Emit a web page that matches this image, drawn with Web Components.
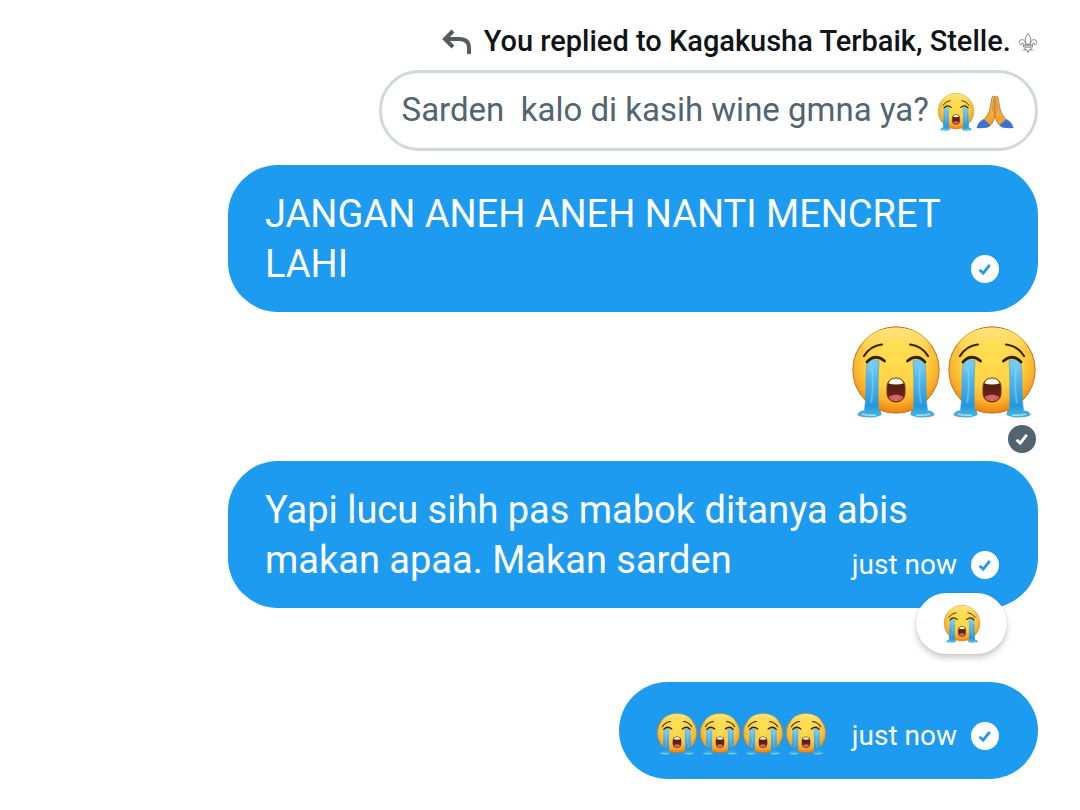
<!DOCTYPE html>
<html lang="id">
<head>
<meta charset="utf-8">
<meta name="viewport" content="width=device-width, initial-scale=1">
<title>Messages</title>
<style>
body {
  margin: 0;
  background: #fff;
  color: #0f1419;
  font-family: Roboto, "Liberation Sans", sans-serif;
}
</style>
</head>
<body>
<chat-thread>
  <reply-context>You replied to Kagakusha Terbaik, Stelle. <fleur-mark></fleur-mark></reply-context>
  <quoted-message>Sarden  kalo di kasih wine gmna ya? <emoji-cry></emoji-cry><emoji-pray></emoji-pray></quoted-message>
  <message-bubble>JANGAN ANEH ANEH NANTI MENCRET LAHI</message-bubble>
  <jumbo-message><emoji-cry></emoji-cry><emoji-cry></emoji-cry></jumbo-message>
  <message-bubble time="just now">Yapi lucu sihh pas mabok ditanya abis makan apaa. Makan sarden<emoji-cry slot="reaction"></emoji-cry></message-bubble>
  <message-bubble time="just now"><emoji-cry></emoji-cry><emoji-cry></emoji-cry><emoji-cry></emoji-cry><emoji-cry></emoji-cry></message-bubble>
</chat-thread>

<script>
function makeTemplate(html) {
  const template = document.createElement('template');
  template.innerHTML = html;
  return template;
}

class BaseElement extends HTMLElement {
  constructor() {
    super();
    const root = this.attachShadow({ mode: 'open' });
    root.appendChild(this.constructor.template.content.cloneNode(true));
  }
}

class ChatThread extends BaseElement {
  static template = makeTemplate(`
<style>
:host {
  display: flex;
  flex-direction: column;
  align-items: flex-end;
  gap: 8px;
  padding: 25px 42px;
}
</style>
<slot></slot>
`);
}

class ReplyContext extends BaseElement {
  static template = makeTemplate(`
<style>
:host {
  display: flex;
  align-items: center;
  gap: 12px;
  margin-bottom: 5px;
  font-size: 29px;
  font-weight: 500;
  line-height: 32px;
}
svg {
  flex: none;
  width: 30px;
  height: 26px;
}
</style>
<svg viewBox="0 0 30 26" fill="none" stroke="#565b62" stroke-width="4" aria-hidden="true">
  <path d="M11 3L3 11L11 19M3 11H17Q27 11 27 20V26"/>
</svg>
<span><slot></slot></span>
`);
}

class FleurMark extends BaseElement {
  static template = makeTemplate(`
<style>
:host {
  display: inline-block;
  width: 20px;
  height: 22px;
  vertical-align: -3px;
}
svg {
  display: block;
}
</style>
<svg viewBox="0 0 20 22" role="img" aria-label="⚜" fill="none" stroke="#777a7e" stroke-width=".9">
  <path d="M10 1.500C6.500 5.500 6.800 8.500 8.300 12.500H11.700C13.200 8.500 13.500 5.500 10 1.500Z"/>
  <path d="M7.800 12.500C7.500 8.500 4.500 6.500 2.300 8.200C.3 10 1.300 12.800 3.800 12.800C3.300 11.300 4.200 10.600 5 11.200C5.700 11.800 5.900 12.500 5.800 13.300"/>
  <path d="M12.200 12.500C12.500 8.500 15.500 6.500 17.700 8.200C19.700 10 18.700 12.800 16.200 12.800C16.700 11.300 15.800 10.600 15 11.200C14.300 11.800 14.100 12.500 14.200 13.300"/>
  <path d="M5.500 13.200H14.500V15H5.500ZM8.500 15L5.500 18L8.500 17.500L10 20.500L11.500 17.500L14.500 18L11.500 15"/>
</svg>
`);
}

class QuotedMessage extends BaseElement {
  static template = makeTemplate(`
<style>
:host {
  --emoji-size: 38px;
  --emoji-gap: 1px;
  display: block;
  box-sizing: border-box;
  max-width: 75%;
  margin-bottom: 6px;
  padding: 15px 20px 16px;
  border: 3px solid #cfd9de;
  border-radius: 40px;
  color: #536471;
  font-size: 33px;
  line-height: 44px;
}
slot {
  white-space: pre-wrap;
}
</style>
<slot></slot>
`);
}

class StatusBadge extends BaseElement {
  static template = makeTemplate(`
<style>
:host {
  display: block;
  width: 28px;
  height: 28px;
}
svg {
  display: block;
}
circle {
  fill: var(--badge-fill, #fff);
}
path {
  stroke: var(--badge-mark, #1d9bf0);
}
</style>
<svg viewBox="0 0 28 28" role="img" aria-label="Sent">
  <circle cx="14" cy="14" r="14"/>
  <path d="M8.6 14.8L12.2 18.2L18.8 9.8" fill="none" stroke-width="2.8"/>
</svg>
`);
}

class MessageBubble extends BaseElement {
  static template = makeTemplate(`
<style>
:host {
  --emoji-size: 42px;
  --emoji-gap: 1px;
  display: block;
  position: relative;
  box-sizing: border-box;
  max-width: 75vw;
  margin-bottom: 6px;
  padding: 24px 39px 23px 37px;
  border-radius: 50px;
  background: #1d9bf0;
  color: #fff;
  font-size: 38px;
  line-height: 50px;
}
:host([reacted]) {
  margin-bottom: 66px;
}
.body {
  display: flow-root;
}
.meta {
  display: flex;
  float: right;
  align-items: center;
  gap: 14px;
  margin: 16px 0 0 24px;
  font-size: 28px;
  line-height: 28px;
}
.meta time:empty {
  display: none;
}
button {
  --emoji-size: 38px;
  --emoji-gap: 0px;
  display: none;
  position: absolute;
  right: 31px;
  bottom: -46px;
  align-items: center;
  justify-content: center;
  width: 91px;
  height: 61px;
  padding: 0;
  border: 0;
  border-radius: 31px;
  background: #fff;
  box-shadow: 0 4px 6px rgba(0, 0, 0, .2), 0 0 2px rgba(0, 0, 0, .12);
}
:host([reacted]) button {
  display: flex;
}
</style>
<div class="body"><slot></slot><span class="meta"><time></time><status-badge></status-badge></span></div>
<button type="button" aria-label="Reaction"><slot name="reaction"></slot></button>
`);

  connectedCallback() {
    this.shadowRoot.querySelector('time').textContent = this.getAttribute('time') || '';
    this.toggleAttribute('reacted', !!this.querySelector('[slot="reaction"]'));
  }
}

class JumboMessage extends BaseElement {
  static template = makeTemplate(`
<style>
:host {
  --emoji-size: 92px;
  display: flex;
  flex-direction: column;
  align-items: flex-end;
  gap: 7px;
}
.emoji {
  display: flex;
  gap: 4px;
}
status-badge {
  --badge-fill: #536471;
  --badge-mark: #fff;
  margin-right: 2px;
}
</style>
<div class="emoji"><slot></slot></div>
<status-badge></status-badge>
`);
}

const emojiStyle = `
<style>
:host {
  display: inline-block;
  width: var(--emoji-size, 38px);
  height: var(--emoji-size, 38px);
  margin-right: var(--emoji-gap, 0px);
  vertical-align: middle;
  white-space: normal;
}
svg {
  display: block;
  width: 100%;
  height: 100%;
}
</style>
`;

class EmojiCry extends BaseElement {
  static template = makeTemplate(`${emojiStyle}
<svg viewBox="0 1 92 92" role="img" aria-label="😭">
  <defs>
    <radialGradient id="face" cx=".5" cy=".36" r=".64">
      <stop offset="0" stop-color="#ffdf4d"/>
      <stop offset=".55" stop-color="#fdd045"/>
      <stop offset=".8" stop-color="#f9b02b"/>
      <stop offset="1" stop-color="#ec8012"/>
    </radialGradient>
    <linearGradient id="shine" x1="0" y1="0" x2="0" y2="1">
      <stop offset="0" stop-color="#fff3b0" stop-opacity=".55"/>
      <stop offset="1" stop-color="#ffe34f" stop-opacity="0"/>
    </linearGradient>
    <linearGradient id="tear" x1="0" y1="0" x2="0" y2="1">
      <stop offset="0" stop-color="#7fd2f6"/>
      <stop offset=".3" stop-color="#54b9ee"/>
      <stop offset=".8" stop-color="#2597dc"/>
      <stop offset="1" stop-color="#49b8ea"/>
    </linearGradient>
    <linearGradient id="mouth" x1="0" y1="0" x2="0" y2="1">
      <stop offset="0" stop-color="#4a1c10"/>
      <stop offset="1" stop-color="#7c2419"/>
    </linearGradient>
  </defs>
  <circle cx="46" cy="45" r="43.2" fill="url(#face)" stroke="#b97a1f" stroke-width="1"/>
  <ellipse cx="46" cy="20" rx="33" ry="17" fill="url(#shine)"/>
  <path d="M14 31Q20 21 32 19.500M60 19.500Q72 21 78 31" fill="none" stroke="#3b2410" stroke-width="2.200" stroke-linecap="round"/>
  <path d="M17 37Q22 33 29 36C28 48 28 66 28.500 84Q32 87 31 90Q24 93 18 92Q10 92 8 90Q7 87 14.500 85.500C16.500 70 15.500 52 17 37Z" fill="url(#tear)" stroke="#5f9d9c" stroke-width=".6"/>
  <path d="M75 37Q70 33 63 36C64 48 64 66 63.500 84Q60 87 61 90Q68 93 74 92Q82 92 84 90Q85 87 77.500 85.500C75.500 70 76.500 52 75 37Z" fill="url(#tear)" stroke="#5f9d9c" stroke-width=".6"/>
  <path d="M22 42Q24 62 21 78M70 42Q68 62 71 78" fill="none" stroke="#a5e0fa" stroke-width="2" opacity=".4"/>
  <path d="M12 89Q19 91 26 90M66 90Q73 91 80 89" fill="none" stroke="#9ce0f8" stroke-width="1.500"/>
  <path d="M17 37Q25 28 34.500 36M57.500 36Q67 28 75 37" fill="none" stroke="#352010" stroke-width="2.800" stroke-linecap="round"/>
  <rect x="37" y="53" width="18" height="24" rx="8.500" fill="url(#mouth)" stroke="#6a3511" stroke-width="1"/>
  <path d="M38.500 58.500Q40 53.600 46 53.600T53.500 58.500Q46 60.500 38.500 58.500Z" fill="#fffaf0"/>
  <path d="M38.500 72Q46 67 53.500 72Q51 76.300 46 76.300T38.500 72Z" fill="#d9626a"/>
</svg>
`);
}

class EmojiPray extends BaseElement {
  static template = makeTemplate(`${emojiStyle}
<svg viewBox="0 0 38 38" role="img" aria-label="🙏">
  <defs>
    <linearGradient id="skin" x1="0" y1="0" x2="0" y2="1">
      <stop offset="0" stop-color="#f5bd5c"/>
      <stop offset="1" stop-color="#f09b28"/>
    </linearGradient>
  </defs>
  <g stroke="#a8691e" stroke-width=".7" fill="url(#skin)">
    <path d="M19 4Q17 2 16 4L14.500 13Q14 17 12 21L6.500 29L13 33.500Q18 30 19 22Z"/>
    <path d="M19 4Q21 2 22 4L23.500 13Q24 17 26 21L31.500 29L25 33.500Q20 30 19 22Z"/>
  </g>
  <path d="M17.500 6L16.500 18M20.500 6L21.500 18" fill="none" stroke="#c9812a" stroke-width=".8"/>
  <path d="M7.500 26L14.500 32L12 34.500Q6 35.500 0.500 35Q2 29 7.500 26Z" fill="#3f72cf"/>
  <path d="M30.500 26L23.500 32L26 34.500Q32 35.500 37.500 35Q36 29 30.500 26Z" fill="#3f72cf"/>
</svg>
`);
}

customElements.define('status-badge', StatusBadge);
customElements.define('emoji-cry', EmojiCry);
customElements.define('emoji-pray', EmojiPray);
customElements.define('fleur-mark', FleurMark);
customElements.define('reply-context', ReplyContext);
customElements.define('quoted-message', QuotedMessage);
customElements.define('message-bubble', MessageBubble);
customElements.define('jumbo-message', JumboMessage);
customElements.define('chat-thread', ChatThread);
</script>
</body>
</html>
